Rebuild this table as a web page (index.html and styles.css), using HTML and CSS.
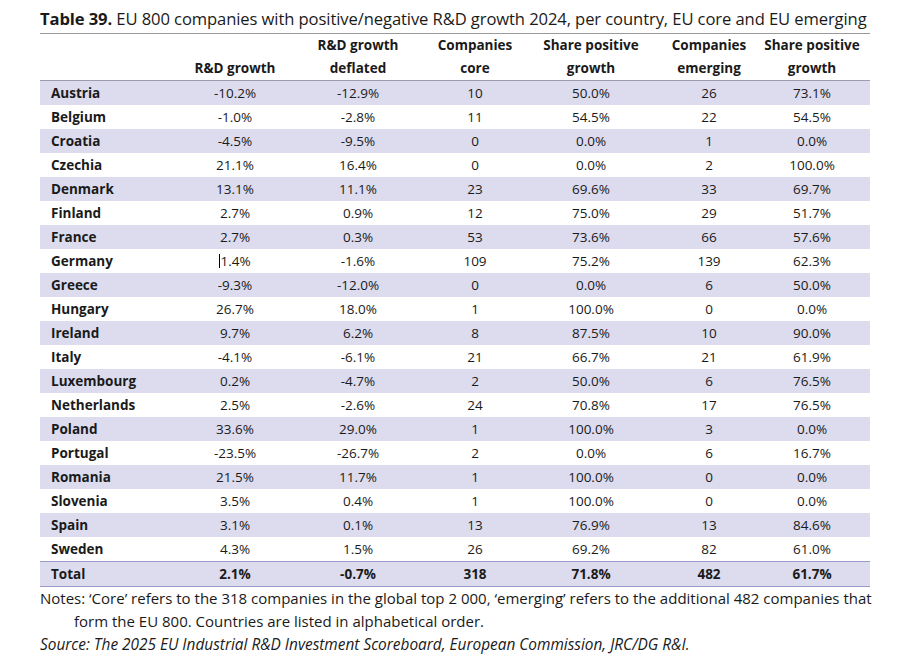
FILE: index.html
```html
<!DOCTYPE html>
<html>
<head>
<meta charset="utf-8">
<link rel="stylesheet" href="styles.css">
</head>
<body>
<div class="page">
  <div class="title"><b>Table 39.</b> EU 800 companies with positive/negative R&amp;D growth 2024, per country, EU core and EU emerging</div>
  <table class="tbl">
    <colgroup>
      <col class="c0"><col class="c1"><col class="c2"><col class="c3"><col class="c4"><col class="c5"><col class="c6">
    </colgroup>
    <thead>
      <tr class="h1"><th></th><th></th><th>R&amp;D growth</th><th>Companies</th><th>Share positive</th><th>Companies</th><th>Share positive</th></tr>
      <tr class="h2"><th></th><th>R&amp;D growth</th><th>deflated</th><th>core</th><th>growth</th><th>emerging</th><th>growth</th></tr>
    </thead>
    <tbody>
      <tr class="s"><th>Austria</th><td>-10.2%</td><td>-12.9%</td><td>10</td><td>50.0%</td><td>26</td><td>73.1%</td></tr>
      <tr><th>Belgium</th><td>-1.0%</td><td>-2.8%</td><td>11</td><td>54.5%</td><td>22</td><td>54.5%</td></tr>
      <tr class="s"><th>Croatia</th><td>-4.5%</td><td>-9.5%</td><td>0</td><td>0.0%</td><td>1</td><td>0.0%</td></tr>
      <tr><th>Czechia</th><td>21.1%</td><td>16.4%</td><td>0</td><td>0.0%</td><td>2</td><td>100.0%</td></tr>
      <tr class="s"><th>Denmark</th><td>13.1%</td><td>11.1%</td><td>23</td><td>69.6%</td><td>33</td><td>69.7%</td></tr>
      <tr><th>Finland</th><td>2.7%</td><td>0.9%</td><td>12</td><td>75.0%</td><td>29</td><td>51.7%</td></tr>
      <tr class="s"><th>France</th><td>2.7%</td><td>0.3%</td><td>53</td><td>73.6%</td><td>66</td><td>57.6%</td></tr>
      <tr><th>Germany</th><td><span class="caret"></span>1.4%</td><td>-1.6%</td><td>109</td><td>75.2%</td><td>139</td><td>62.3%</td></tr>
      <tr class="s"><th>Greece</th><td>-9.3%</td><td>-12.0%</td><td>0</td><td>0.0%</td><td>6</td><td>50.0%</td></tr>
      <tr><th>Hungary</th><td>26.7%</td><td>18.0%</td><td>1</td><td>100.0%</td><td>0</td><td>0.0%</td></tr>
      <tr class="s"><th>Ireland</th><td>9.7%</td><td>6.2%</td><td>8</td><td>87.5%</td><td>10</td><td>90.0%</td></tr>
      <tr><th>Italy</th><td>-4.1%</td><td>-6.1%</td><td>21</td><td>66.7%</td><td>21</td><td>61.9%</td></tr>
      <tr class="s"><th>Luxembourg</th><td>0.2%</td><td>-4.7%</td><td>2</td><td>50.0%</td><td>6</td><td>76.5%</td></tr>
      <tr><th>Netherlands</th><td>2.5%</td><td>-2.6%</td><td>24</td><td>70.8%</td><td>17</td><td>76.5%</td></tr>
      <tr class="s"><th>Poland</th><td>33.6%</td><td>29.0%</td><td>1</td><td>100.0%</td><td>3</td><td>0.0%</td></tr>
      <tr><th>Portugal</th><td>-23.5%</td><td>-26.7%</td><td>2</td><td>0.0%</td><td>6</td><td>16.7%</td></tr>
      <tr class="s"><th>Romania</th><td>21.5%</td><td>11.7%</td><td>1</td><td>100.0%</td><td>0</td><td>0.0%</td></tr>
      <tr><th>Slovenia</th><td>3.5%</td><td>0.4%</td><td>1</td><td>100.0%</td><td>0</td><td>0.0%</td></tr>
      <tr class="s"><th>Spain</th><td>3.1%</td><td>0.1%</td><td>13</td><td>76.9%</td><td>13</td><td>84.6%</td></tr>
      <tr><th>Sweden</th><td>4.3%</td><td>1.5%</td><td>26</td><td>69.2%</td><td>82</td><td>61.0%</td></tr>
      <tr class="total"><th>Total</th><td>2.1%</td><td>-0.7%</td><td>318</td><td>71.8%</td><td>482</td><td>61.7%</td></tr>
    </tbody>
  </table>
  <p class="notes">Notes: ‘Core’ refers to the 318 companies in the global top 2 000, ‘emerging’ refers to the additional 482 companies that<br>form the EU 800. Countries are listed in alphabetical order.</p>
  <p class="source">Source: The 2025 EU Industrial R&amp;D Investment Scoreboard, European Commission, JRC/DG R&amp;I.</p>
</div>
</body>
</html>
```
FILE: styles.css
```css
html, body {
  margin: 0;
  padding: 0;
  background: #ffffff;
}
.page {
  width: 830px;
  padding: 8px 0 0 40px;
  font-family: "Open Sans", "Liberation Sans", sans-serif;
  color: #1a1a1a;
}
.title {
  font-size: 16.6px;
  line-height: 21px;
  white-space: nowrap;
  padding-bottom: 4px;
  letter-spacing: -0.1px;
}
.title b {
  font-weight: 700;
}
.tbl {
  width: 830px;
  border-collapse: collapse;
  table-layout: fixed;
  font-size: 13.5px;
  border-top: 1px solid #9a9a9a;
}
.c0 { width: 146px; }
.c1 { width: 98px; }
.c2 { width: 148px; }
.c3 { width: 86px; }
.c4 { width: 146px; }
.c5 { width: 90px; }
.c6 { width: 116px; }
.tbl th, .tbl td {
  padding: 0;
  text-align: center;
  white-space: nowrap;
  height: 24px;
  line-height: 24px;
}
.tbl thead th {
  font-weight: 700;
  height: 23px;
  line-height: 23px;
}
.tbl thead tr.h2 th {
  border-bottom: 1px solid #9c9cae;
}
.tbl tbody th {
  text-align: left;
  padding-left: 11px;
  font-weight: 700;
}
.tbl tbody td {
  font-weight: 400;
}
.tbl tr.s th, .tbl tr.s td {
  background: #dcdcee;
}
.tbl tr.total th, .tbl tr.total td {
  background: #dcdcee;
  font-weight: 700;
  border-top: 1px solid #9a9ac8;
  border-bottom: 1px solid #9a9ac8;
}
.caret {
  display: inline-block;
  width: 0;
  height: 14px;
  border-left: 1px solid #000;
  vertical-align: -2px;
}
.notes {
  margin: 0;
  font-size: 15px;
  line-height: 23px;
  padding: 0 0 0 34px;
  text-indent: -34px;
  white-space: nowrap;
}
.source {
  margin: 0;
  font-size: 15.4px;
  line-height: 24px;
  font-style: italic;
  white-space: nowrap;
}
```
